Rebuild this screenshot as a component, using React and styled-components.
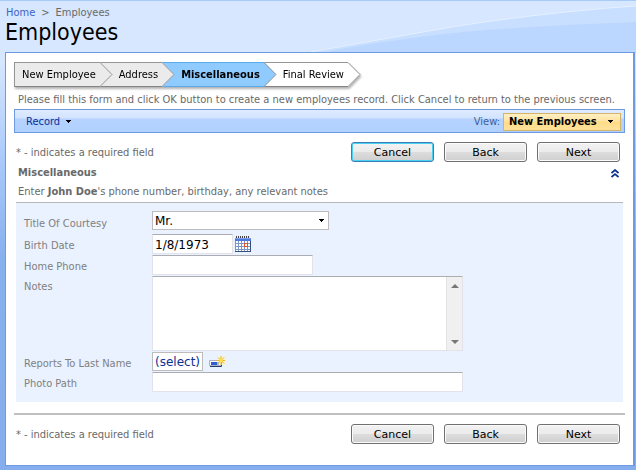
import React, { useState } from "react";
import styled, { createGlobalStyle, css } from "styled-components";

const steps = [
  { name: "New Employee", fill: "#ebebeb" },
  { name: "Address", fill: "#ebebeb" },
  { name: "Miscellaneous", fill: "#8fcbff", current: true },
  { name: "Final Review", fill: "#ffffff" },
];

const DownArrow = () => (
  <ArrowIcon width="7" height="4" viewBox="0 0 7 4" aria-hidden="true">
    <path d="M1 0h5v1h-1v1h-1v1h-1v-1h-1v-1h-1z" fill="#000" shapeRendering="crispEdges" />
  </ArrowIcon>
);

const CalendarIcon = () => (
  <svg width="16" height="16" viewBox="0 0 16 16" shapeRendering="crispEdges">
    <path d="M0 1h16v15H0z" fill="#7d98c4" />
    <path d="M0 1h16v1H0z" fill="#dfe8fa" />
    <path d="M1 0h1v2h-1zM3 0h1v2h-1zM5 0h1v2h-1zM7 0h1v2h-1zM9 0h1v2h-1zM11 0h1v2h-1zM13 0h1v2h-1z" fill="#444" />
    <path d="M0 2h16v1H0z" fill="#7fa0f2" />
    <path d="M0 3h16v2H0z" fill="#4f78dc" />
    <path
      d="M1 5h2v2h-2zM4 5h2v2h-2zM7 5h2v2h-2zM10 5h2v2h-2zM13 5h2v2h-2zM1 8h2v2h-2zM4 8h2v2h-2zM7 8h2v2h-2zM13 8h2v2h-2zM1 11h2v2h-2zM4 11h2v2h-2zM7 11h2v2h-2zM10 11h2v2h-2zM13 11h2v2h-2zM1 14h2v1h-2zM4 14h2v1h-2zM7 14h2v1h-2zM10 14h2v1h-2zM13 14h2v1h-2z"
      fill="#ffffff"
    />
    <path d="M15 5h1v11H0v-1h15z" fill="#35507f" />
    <path d="M9 7h4v4H9z" fill="#e4532b" />
    <path d="M10 8h2v2h-2z" fill="#fff" />
  </svg>
);

const NewItemIcon = () => (
  <svg width="16" height="12" viewBox="0 0 16 12">
    <path d="M0.5 4.5h12v5h-12z" fill="#fff" stroke="#a9b3c2" />
    <path d="M12.500 5v5.500H1" fill="none" stroke="#27406f" />
    <path d="M2 6h8v3H2z" fill="#2f5fd0" />
    <path d="M8 0h8v9H8z" fill="#fff3b8" opacity="0.600" />
    <path d="M12 0v9M7.500 4.500h8.500M9 1.500l6 6M15 1.500l-6 6" stroke="#e5b422" />
    <path d="M10.500 3h3v3h-3z" fill="#ffe04f" />
  </svg>
);

const CollapseIcon = () => (
  <svg width="8" height="9" viewBox="0 0 8 9">
    <path d="M0.500 4L4 1L7.500 4M0.500 8L4 5L7.500 8" fill="none" stroke="#0a2f8f" strokeWidth="1.700" />
  </svg>
);

const Actions = ({ focused }) => (
  <ActionRow>
    <Hint>* - indicates a required field</Hint>
    <FormButton type="button" $focused={focused}>
      Cancel
    </FormButton>
    <FormButton type="button">Back</FormButton>
    <FormButton type="button">Next</FormButton>
  </ActionRow>
);

export default function App() {
  const [date, setDate] = useState("1/8/1973");

  return (
    <>
      <GlobalStyle />
      <Page>
        <Swoosh viewBox="0 0 636 52" preserveAspectRatio="none" aria-hidden="true">
          <path d="M300 52C350 44 400 35 440 28S560 10 636 5V52Z" fill="#c9dfff" />
          <path d="M320 52C370 42 440 32 500 28S590 23 636 21V52Z" fill="#bcd7ff" />
          <path d="M310 51C350 44 400 35 440 28S560 10 636 5" fill="none" stroke="#e6f0ff" />
        </Swoosh>
        <Breadcrumb>
          <a href="#home">Home</a>
          <span>&gt;</span>
          <span>Employees</span>
        </Breadcrumb>
        <Title>Employees</Title>
        <Panel>
          <Steps>
            {steps.map((step) => (
              <Step key={step.name} $fill={step.fill} $current={step.current}>
                {step.name}
                <StepTip width="13" height="25" viewBox="0 0 13 25">
                  <path d="M0 0L12 12.500L0 25Z" fill={step.fill} />
                  <path d="M0 0.500L12 12.500L0 24.500" fill="none" stroke="#959595" />
                </StepTip>
              </Step>
            ))}
          </Steps>
          <Instructions>
            Please fill this form and click OK button to create a new employees
            record. Click Cancel to return to the previous screen.
          </Instructions>
          <ActionBar>
            <MenuButton type="button">
              Record
              <DownArrow />
            </MenuButton>
            <ViewLabel htmlFor="view">View:</ViewLabel>
            <ViewBox>
              <ViewSelect id="view">
                <option>New Employees</option>
              </ViewSelect>
              <DownArrow />
            </ViewBox>
          </ActionBar>
          <Actions focused />
          <Category>
            <CategoryTitle>Miscellaneous</CategoryTitle>
            <CollapseButton type="button" aria-label="Collapse">
              <CollapseIcon />
            </CollapseButton>
          </Category>
          <Description>
            Enter <b>John Doe</b>'s phone number, birthday, any relevant notes
          </Description>
          <Form>
            <Row>
              <Label htmlFor="courtesy">Title Of Courtesy</Label>
              <CourtesyBox>
                <CourtesySelect id="courtesy">
                  <option>Mr.</option>
                </CourtesySelect>
                <DownArrow />
              </CourtesyBox>
            </Row>
            <Row>
              <Label htmlFor="birth">Birth Date</Label>
              <Input
                id="birth"
                $width={81}
                value={date}
                onChange={(e) => setDate(e.target.value)}
              />
              <IconButton type="button" aria-label="Calendar">
                <CalendarIcon />
              </IconButton>
            </Row>
            <Row>
              <Label htmlFor="phone">Home Phone</Label>
              <Input id="phone" $width={161} />
            </Row>
            <Row $top>
              <Label htmlFor="notes">Notes</Label>
              <NotesBox>
                <Notes id="notes" />
                <ScrollTrack aria-hidden="true">
                  <svg width="8" height="4" viewBox="0 0 8 4">
                    <path d="M0 4L4 0L8 4z" fill="#777" />
                  </svg>
                  <svg width="8" height="4" viewBox="0 0 8 4">
                    <path d="M0 0L4 4L8 0z" fill="#777" />
                  </svg>
                </ScrollTrack>
              </NotesBox>
            </Row>
            <Row>
              <Label as="span">Reports To Last Name</Label>
              <Lookup href="#select">(select)</Lookup>
              <IconButton type="button" aria-label="New employee">
                <NewItemIcon />
              </IconButton>
            </Row>
            <Row>
              <Label htmlFor="photo">Photo Path</Label>
              <Input id="photo" $width={311} />
            </Row>
          </Form>
          <Divider />
          <Actions />
        </Panel>
      </Page>
    </>
  );
}

const tahoma = `"DejaVu Sans Condensed", "DejaVu Sans", sans-serif`;
const verdana = `"DejaVu Sans", sans-serif`;

const GlobalStyle = createGlobalStyle`
  * {
    box-sizing: border-box;
  }
  body {
    margin: 0;
    font-family: ${tahoma};
    font-stretch: condensed;
    font-size: 11px;
    line-height: 14px;
    color: #696969;
  }
  input, select, textarea, button {
    font: inherit;
    margin: 0;
  }
`;
const Page = styled.div`
  position: relative;
  min-height: 100vh;
  padding: 5px 1px 4px 5px;
  border-top: 1px solid #a9cbfa;
  background: linear-gradient(
    #d6e7ff 0,
    #d6e7ff 60px,
    #a9c9fb 160px,
    #86b0ee 260px,
    #86aeee 100%
  );
`;
const Swoosh = styled.svg`
  position: absolute;
  top: 0;
  left: 0;
  width: 100%;
  height: 52px;
`;
const Breadcrumb = styled.nav`
  position: relative;
  display: flex;
  gap: 6px;
  padding-left: 1px;
  a {
    color: #3d62c8;
    text-decoration: none;
  }
`;
const Title = styled.h1`
  position: relative;
  margin: 0 0 8px;
  font-size: 23px;
  font-weight: normal;
  line-height: 24px;
  color: #000;
`;
const Panel = styled.main`
  position: relative;
  padding: 9px 8px 21px;
  border: 1px solid #6d9ae0;
  border-right-width: 2px;
  background: #fff;
`;
const Steps = styled.ol`
  display: flex;
  margin: 0;
  padding: 0;
  list-style: none;
  filter: drop-shadow(1px 2px 1px rgba(0, 0, 0, 0.3));
`;
const Step = styled.li`
  position: relative;
  height: 25px;
  padding: 0 4px 0 19px;
  border-top: 1px solid #959595;
  border-bottom: 1px solid #858585;
  line-height: 23px;
  color: #000;
  background: ${(props) => props.$fill};
  &:first-child {
    padding-left: 7px;
    border-left: 1px solid #959595;
  }
  ${(props) =>
    props.$current &&
    css`
      border-top-color: #5aa9ea;
      border-bottom-color: #5aa9ea;
      font-weight: bold;
    `}
`;
const StepTip = styled.svg`
  position: absolute;
  z-index: 1;
  top: -1px;
  left: 100%;
`;
const Instructions = styled.p`
  margin: 6px 0 2px;
  padding-left: 4px;
`;
const ActionBar = styled.div`
  display: flex;
  align-items: center;
  height: 24px;
  padding: 2px 3px 0 11px;
  border: 1px solid #6d9ae0;
  background: linear-gradient(#deebff 0, #d2e4ff 8px, #b6d3ff 9px, #b0d0ff 100%);
`;
const ArrowIcon = styled.svg`
  flex: none;
  pointer-events: none;
`;
const MenuButton = styled.button`
  display: flex;
  align-items: center;
  gap: 5px;
  margin-right: auto;
  padding: 0;
  border: 0;
  background: none;
  color: #0a3096;
`;
const ViewLabel = styled.label`
  margin-right: 3px;
  color: #3e5d94;
`;
const ViewBox = styled.div`
  display: flex;
  align-items: center;
  height: 18px;
  padding-right: 6px;
  border: 1px solid #d4b36a;
  background: linear-gradient(#fff0c4, #ffe3a0 7px, #ffdb85 8px, #ffe29a);
`;
const ViewSelect = styled.select`
  width: 103px;
  padding: 0 0 0 5px;
  border: 0;
  appearance: none;
  background: none;
  font-weight: bold;
  color: #000;
`;
const ActionRow = styled.div`
  display: flex;
  align-items: center;
  gap: 10px;
  margin-top: 9px;
  padding-right: 5px;
`;
const Hint = styled.span`
  margin-right: auto;
  padding: 2px 0 0 2px;
`;
const FormButton = styled.button`
  width: 83px;
  height: 20px;
  padding: 2px 0 0;
  border: 1px solid ${(props) => (props.$focused ? "#3c7fb1" : "#707070")};
  border-radius: 3px;
  box-shadow: inset 0 0 0 1px
    ${(props) => (props.$focused ? "#48d1f5" : "#fbfbfb")};
  background: linear-gradient(#f2f2f2, #ebebeb 50%, #dddddd 50%, #cfcfcf);
  font-family: ${verdana};
  font-stretch: normal;
  color: #000;
`;
const Category = styled.div`
  display: flex;
  align-items: center;
  justify-content: space-between;
  margin-top: 4px;
  padding: 0 6px 0 4px;
`;
const CategoryTitle = styled.h2`
  margin: 0;
  font-size: 11px;
  font-weight: bold;
  line-height: 14px;
`;
const CollapseButton = styled.button`
  display: flex;
  padding: 0;
  border: 0;
  background: none;
`;
const Description = styled.p`
  margin: 5px 0 3px;
  padding-left: 4px;
`;
const Form = styled.form`
  display: grid;
  gap: 1px;
  margin: 0 2px;
  padding: 8px 8px 10px;
  border-top: 1px solid #b8b8b8;
  background: #eaf2ff;
`;
const Row = styled.div`
  display: flex;
  align-items: ${(props) => (props.$top ? "flex-start" : "center")};
`;
const Label = styled.label`
  width: 128px;
  padding-top: 4px;
  color: #808080;
`;
const field = css`
  border: 1px solid #e2e3ea;
  border-top-color: #abadb3;
  border-radius: 1px;
  background: #fff;
  font-family: ${verdana};
  font-stretch: normal;
  font-size: 12px;
  color: #000;
`;
const Input = styled.input`
  ${field}
  width: ${(props) => props.$width}px;
  height: 20px;
  padding: 2px 2px 0;
`;
const CourtesyBox = styled.div`
  display: flex;
  align-items: center;
  width: 177px;
  height: 19px;
  margin-bottom: 3px;
  padding-right: 3px;
  border: 1px solid #bcbcbc;
  background: #fff;
`;
const CourtesySelect = styled.select`
  flex: 1;
  padding: 0 2px;
  border: 0;
  appearance: none;
  background: none;
  font-family: ${verdana};
  font-stretch: normal;
  font-size: 12px;
  color: #000;
`;
const NotesBox = styled.div`
  ${field}
  display: flex;
  width: 311px;
  height: 75px;
`;
const Notes = styled.textarea`
  flex: 1;
  padding: 2px;
  border: 0;
  resize: none;
  background: none;
`;
const ScrollTrack = styled.div`
  display: flex;
  flex-direction: column;
  align-items: center;
  justify-content: space-between;
  width: 16px;
  padding: 7px 0 6px;
  border-left: 1px solid #e3e3e3;
  background: #f0f0f0;
`;
const Lookup = styled.a`
  height: 19px;
  padding: 0 2px;
  border: 1px solid #bcbcbc;
  background: #fff;
  font-family: ${verdana};
  font-stretch: normal;
  font-size: 12px;
  line-height: 18px;
  color: #0a3096;
  text-decoration: none;
`;
const IconButton = styled.button`
  display: flex;
  margin-left: 2px;
  padding: 0;
  border: 0;
  background: none;
  ${Lookup} + & {
    margin-left: 6px;
  }
`;
const Divider = styled.hr`
  height: 2px;
  margin: 11px 0 0;
  border: 0;
  background: #c0c0c0;
`;
